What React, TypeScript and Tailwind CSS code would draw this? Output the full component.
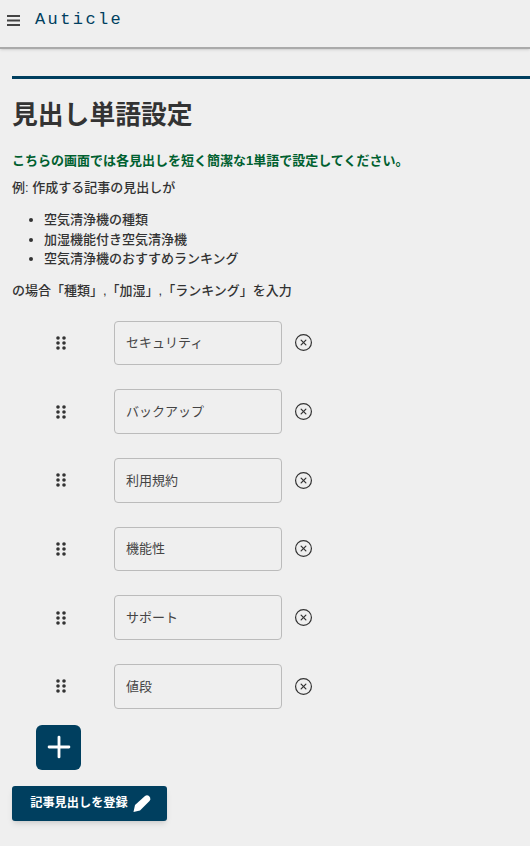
import { LuCircleX, LuPlus } from "react-icons/lu";

const jp = "font-['Liberation_Sans','Noto_Sans_CJK_JP',sans-serif]";
const words = ["セキュリティ", "バックアップ", "利用規約", "機能性", "サポート", "値段"];

const DragHandle = () => (
  <svg width="10" height="14" viewBox="0 0 10 14" className="fill-[#333]">
    {[2, 7, 12].map((y) => (
      <g key={y}>
        <circle cx="2" cy={y} r="1.8" />
        <circle cx="8" cy={y} r="1.8" />
      </g>
    ))}
  </svg>
);

const WordRow = ({ word }: { word: string }) => (
  <div className="flex items-center h-[44.7px] mb-[24px]">
    <div className="w-[102px] flex justify-center pr-[4px]">
      <DragHandle />
    </div>
    <input
      defaultValue={word}
      className={`${jp} w-[168px] h-full rounded-[4px] border border-[#bbb] bg-transparent px-[11px] pb-[2px] text-[13px] text-[#444] outline-none`}
    />
    <div className="ml-[12px] text-[#333]">
      <LuCircleX size={19} strokeWidth={1.5} />
    </div>
  </div>
);

export default function App() {
  return (
    <div className={`${jp} min-h-[846px] bg-[#efefef] text-[#333] overflow-hidden`}>
      <header className="h-[49px] flex items-center border-b-2 border-[#aaa] shadow-sm pb-[7px] pl-[7px]">
        <svg width="13" height="11" viewBox="0 0 13 11" className="fill-[#444]">
          <rect y="0" width="13" height="2" />
          <rect y="4.5" width="13" height="2" />
          <rect y="9" width="13" height="2" />
        </svg>
        <span className="ml-[15px] font-['Liberation_Mono',monospace] text-[17px] leading-[20px] tracking-[2.4px] text-[#003f5f]">
          Auticle
        </span>
      </header>
      <main className="pl-[12px] pt-[27px]">
        <div className="h-[3px] bg-[#003f5f]" />
        <h1 className="mt-[18px] text-[25.8px] leading-[36px] font-bold">見出し単語設定</h1>
        <p className="mt-[18px] text-[13px] leading-[20px] font-bold text-[#00602f]">
          こちらの画面では各見出しを短く簡潔な1単語で設定してください。
        </p>
        <p className="mt-[7px] text-[13px] leading-[20px] font-medium">例: 作成する記事の見出しが</p>
        <ul className="mt-[12px] pl-[32px] list-disc text-[13px] leading-[19.5px] font-medium">
          <li>空気清浄機の種類</li>
          <li>加湿機能付き空気清浄機</li>
          <li>空気清浄機のおすすめランキング</li>
        </ul>
        <p className="mt-[12px] text-[13px] leading-[20px] font-medium">
          の場合「種類」,「加湿」,「ランキング」を入力
        </p>
        <div className="mt-[20px]">
          {words.map((w) => (
            <WordRow key={w} word={w} />
          ))}
        </div>
        <button className="-mt-[8px] ml-[24px] w-[45px] h-[45px] rounded-[6px] bg-[#003f5f] flex items-center justify-center text-white">
          <LuPlus size={34} strokeWidth={2} />
        </button>
        <button className="mt-[16px] h-[35px] w-[155px] rounded-[3px] bg-[#003f5f] shadow-md flex items-center justify-center gap-[5px] pl-[2px] text-white text-[12.2px] font-bold">
          記事見出しを登録
          <svg width="18" height="18" viewBox="0 0 18 18" className="fill-white">
            <path d="M0.5 18 L2 11 L12 2 Q14 0.5 16 2 L17 3.5 Q18 5.5 16.5 7 L7 16.5 Z" />
          </svg>
        </button>
      </main>
    </div>
  );
}
